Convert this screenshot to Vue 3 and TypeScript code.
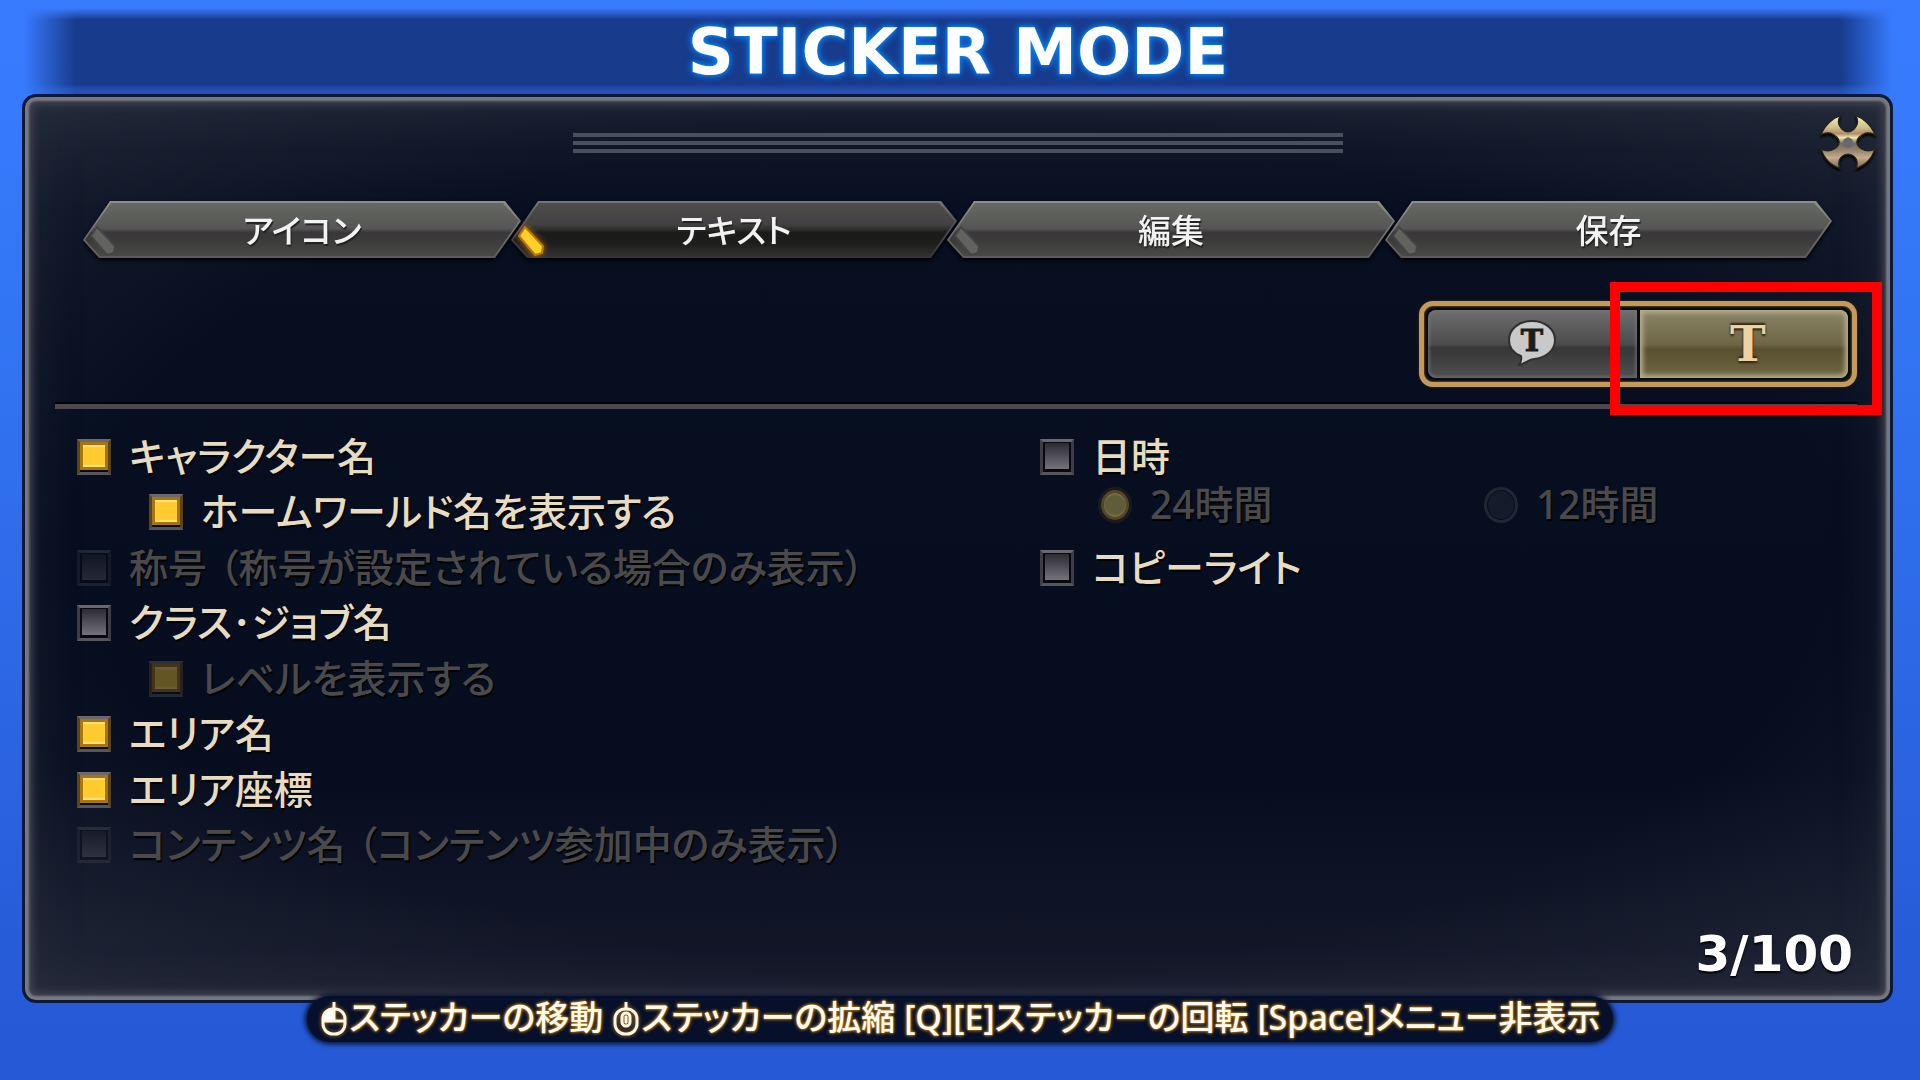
<script setup lang="ts">
import { ref } from 'vue'

interface Option {
  id: string
  label: string
  note?: string
  checked: boolean
  disabled?: boolean
  nested?: boolean
}

const tabs: string[] = ['アイコン', 'テキスト', '編集', '保存']
const activeTab = ref<number>(1)
const textKind = ref<'bubble' | 'plain'>('plain')
const clock = ref<'24' | '12'>('24')

const options = ref<Option[]>([
  { id: 'name', label: 'キャラクター名', checked: true },
  { id: 'world', label: 'ホームワールド名を表示する', checked: true, nested: true },
  { id: 'title', label: '称号', note: '（称号が設定されている場合のみ表示）', checked: false, disabled: true },
  { id: 'job', label: 'クラス･ジョブ名', checked: false },
  { id: 'level', label: 'レベルを表示する', checked: true, disabled: true, nested: true },
  { id: 'area', label: 'エリア名', checked: true },
  { id: 'coords', label: 'エリア座標', checked: true },
  { id: 'duty', label: 'コンテンツ名', note: '（コンテンツ参加中のみ表示）', checked: false, disabled: true },
])
const showDate = ref(false)
const showCopyright = ref(false)
</script>

<template>
  <div class="screen">
    <header class="banner">
      <h1>STICKER MODE</h1>
    </header>

    <main class="panel">
      <div class="grip"><i></i><i></i><i></i></div>
      <button class="close" type="button" aria-label="閉じる">
        <svg viewBox="88 73 172 170" width="56" height="56">
          <defs>
            <linearGradient id="brass" x1="0" y1="0" x2="0" y2="1">
              <stop offset="0" stop-color="#f6efb4" />
              <stop offset=".22" stop-color="#cfc08c" />
              <stop offset=".34" stop-color="#b08c68" />
              <stop offset=".42" stop-color="#f3e9a8" />
              <stop offset=".52" stop-color="#6f6c68" />
              <stop offset=".64" stop-color="#8f8068" />
              <stop offset=".8" stop-color="#c4ab90" />
              <stop offset="1" stop-color="#7c6448" />
            </linearGradient>
          </defs>
          <path
            d="M150 77C128 84 102 106 91 136Q106 127 120 131Q146 142 147 158Q146 176 122 184Q106 188 92 180C100 210 124 232 149 239Q143 226 148 212Q156 196 174 195Q192 196 200 212Q205 226 198 239C224 232 248 210 256 180Q242 188 226 184Q202 176 201 158Q202 142 228 131Q242 127 257 136C246 106 220 84 198 77Q206 92 202 104Q192 126 174 127Q156 126 146 104Q142 92 150 77Z"
            fill="url(#brass)" stroke="#2a241e" stroke-width="4" />
          <path d="M160 150L174 143L188 150L189 170L174 177L159 170Z" fill="#66686e" />
        </svg>
      </button>

      <nav class="tabs">
        <button v-for="(tab, i) in tabs" :key="tab" type="button" class="tab" :class="{ active: i === activeTab }"
          @click="activeTab = i">
          <svg class="gem" viewBox="0 0 32 34" width="32" height="34" aria-hidden="true">
            <path d="M10 3L28 22L27 29L20 31L4 12Z" />
          </svg>
          <span>{{ tab }}</span>
        </button>
      </nav>

      <div class="kind-row">
        <div class="kinds">
          <button type="button" class="kind" :class="{ on: textKind === 'bubble' }" aria-label="吹き出し"
            @click="textKind = 'bubble'">
            <svg viewBox="0 0 50 48" width="50" height="48">
              <path d="M25 3C38 3 48 11 48 22C48 33 38 40 27 41C22 41 18 46 12 47Q15 43 14 38C6 35 2 29 2 22C2 11 12 3 25 3Z"
                fill="#c9c9c9" stroke="#303030" stroke-width="2" />
              <text x="25" y="33" text-anchor="middle" font-size="30" fill="#1c1c1c" stroke="#1c1c1c">T</text>
            </svg>
          </button>
          <button type="button" class="kind" :class="{ on: textKind === 'plain' }" @click="textKind = 'plain'">
            <span>T</span>
          </button>
          <div class="marker"></div>
        </div>
      </div>

      <hr />

      <div class="options">
        <div class="column">
          <label v-for="o in options" :key="o.id" class="option" :class="{ nested: o.nested, off: o.disabled }">
            <input v-model="o.checked" type="checkbox" :disabled="o.disabled" />
            <span>{{ o.label }}<span v-if="o.note" class="note">{{ o.note }}</span></span>
          </label>
        </div>
        <div class="column">
          <label class="option">
            <input v-model="showDate" type="checkbox" />
            <span>日時</span>
          </label>
          <div class="clocks">
            <label class="option off">
              <input v-model="clock" type="radio" name="clock" value="24" disabled />
              <span>24時間</span>
            </label>
            <label class="option off">
              <input v-model="clock" type="radio" name="clock" value="12" disabled />
              <span>12時間</span>
            </label>
          </div>
          <label class="option">
            <input v-model="showCopyright" type="checkbox" />
            <span>コピーライト</span>
          </label>
        </div>
      </div>

      <p class="count">3/100</p>
    </main>

    <footer class="hints">
      <svg viewBox="0 0 28 36" width="30" height="36" aria-hidden="true">
        <rect x="3" y="8" width="22" height="25" rx="10" />
        <path d="M14 1V8M14 8V19M4 20H24" />
        <path class="solid" d="M13 9V19H4V16Q5 9 13 9Z" />
      </svg>
      <span>ステッカーの移動</span>
      <svg class="second" viewBox="0 0 28 36" width="30" height="36" aria-hidden="true">
        <rect x="3" y="8" width="22" height="25" rx="10" />
        <path d="M14 1V8" />
        <rect x="10" y="12" width="8" height="13" rx="4" />
        <path class="solid" d="M13 15H15V22H13Z" />
      </svg>
      <span>ステッカーの拡縮 [Q][E]ステッカーの回転 [Space]メニュー非表示</span>
    </footer>
  </div>
</template>

<style>
body {
  margin: 0;
  background: #2659d5;
}
</style>

<style scoped>
.screen {
  box-sizing: border-box;
  min-height: 100vh;
  display: flex;
  flex-direction: column;
  padding-bottom: 36px;
  background: linear-gradient(180deg, #397bff 0%, #3377f6 25%, #2d68e6 60%, #2659d5 95%);
  font-family: "Noto Sans", "Noto Sans CJK JP", sans-serif;
  font-feature-settings: "palt";
  font-weight: 500;
  color: #e8dcc0;
}

button {
  border: 0;
  padding: 0;
  background: none;
  font: inherit;
  color: inherit;
  cursor: pointer;
}

.banner {
  height: 94px;
  margin: 0 28px 0 24px;
  padding-top: 10px;
  box-sizing: border-box;
  display: flex;
  align-items: center;
  justify-content: center;
  background: linear-gradient(180deg, transparent 8px, #183b8c 20px, #183b8c 84px, #2450b4 90px);
  mask-image: linear-gradient(90deg, transparent, #000 52px, #000 calc(100% - 52px), transparent);
}

h1 {
  margin: 0;
  font: bold 64px/72px "DejaVu Sans", sans-serif;
  color: #fff;
  text-shadow: 0 0 3px #0a78e8, 0 0 6px #0a86f0, 0 0 8px #0a78e8;
}

.panel {
  position: relative;
  flex: 1;
  display: flex;
  flex-direction: column;
  margin: 0 27px 0 22px;
  border: 3px solid #0a1a38;
  border-radius: 14px;
  background:
    radial-gradient(ellipse at center, transparent 66%, rgba(52, 60, 74, 0.4) 100%),
    linear-gradient(180deg, #141c2c 0, #070f20 110px, #060d1e 75%, #161a2b 100%);
  box-shadow: inset 0 0 2px 4px #777880, inset 0 0 8px 7px #454652, inset 0 0 50px 4px rgba(52, 58, 72, 0.4);
}

.grip {
  width: 770px;
  max-width: 42%;
  margin: 36px auto 0;
  display: grid;
  gap: 4px;
}

.grip i {
  height: 4px;
  background: #4a4f5e;
}

.close {
  position: absolute;
  top: 17px;
  right: 14px;
  height: 56px;
}

.close svg {
  display: block;
  filter: drop-shadow(0 2px 1px #000);
}

.tabs {
  display: grid;
  grid-template-columns: 428fr 436fr 438fr 437fr;
  margin: 48px 68px 0 58px;
  filter: drop-shadow(0 2px 2px #000);
}

.tab {
  position: relative;
  height: 57px;
  margin-right: -10px;
  background: linear-gradient(#8e8e8e, #777 40%, #5a5a5a);
  clip-path: polygon(27px 0, calc(100% - 16px) 0, 100% 20px, calc(100% - 26px) 100%, 16px 100%, 0 39px);
  font-size: 33px;
  line-height: 60px;
  color: #f2f2f2;
  text-shadow: 1px 2px 1px #222;
}

.tab::before {
  content: "";
  position: absolute;
  inset: 2px;
  clip-path: polygon(26px 0, calc(100% - 16px) 0, 100% 18px, calc(100% - 25px) 100%, 15px 100%, 0 37px);
  background: linear-gradient(#666863 0, #555655 48%, #3a363a 56%, #3b3b3a 70%, #484a47 100%);
}

.tab.active {
  background: linear-gradient(#777, #555 40%, #333);
}

.tab.active::before {
  background: linear-gradient(#4d4d4a 0, #444044 40%, #2c3028 50%, #1b1b1b 56%, #1d1d1c 75%, #31312f 100%);
}

.tab span {
  position: relative;
}

.gem {
  position: absolute;
  left: 4px;
  bottom: 0;
  fill: #62635f;
  stroke: #454545;
  stroke-width: 2;
}

.active .gem {
  fill: #ffd02a;
  stroke: #b8780c;
  filter: drop-shadow(0 0 3px #c06a10);
}

.kind-row {
  display: flex;
  justify-content: flex-end;
  margin: 43px 33px 0 0;
}

.kinds {
  position: relative;
  box-sizing: border-box;
  display: grid;
  grid-template-columns: 1fr 1fr;
  gap: 3px;
  width: 438px;
  height: 86px;
  padding: 4px;
  border: 5px solid #c49a5c;
  border-radius: 14px;
  background: #050b18;
  box-shadow: inset 0 0 2px 1px #5a3c18, 0 0 2px #5a3c18;
}

.kind {
  display: flex;
  align-items: center;
  justify-content: center;
  padding-bottom: 4px;
  border-radius: 8px 0 0 8px;
  background: linear-gradient(#6e6e6e 0, #4c4c4c 50%, #363636 56%, #505050 100%);
  box-shadow: inset 0 0 3px 2px #77777799;
}

.kind + .kind {
  padding: 0 0 0 8px;
  border-radius: 0 8px 8px 0;
}

.kind.on {
  background: linear-gradient(#8c8468 0, #6e6646 50%, #5a5030 58%, #6e6642 100%);
  box-shadow: inset 0 0 5px 3px #b4b088;
}

.kind text,
.kind span {
  font-family: "DejaVu Serif", serif;
  font-weight: bold;
}

.kind span {
  font-size: 48px;
  line-height: 60px;
  color: #ecd2a4;
  text-shadow: 0 -2px 2px #2e2814, 0 2px 2px #2e2814;
}

.marker {
  position: absolute;
  top: -24px;
  right: -30px;
  width: 252px;
  height: 113px;
  border: 10px solid #f00;
  pointer-events: none;
}

hr {
  width: auto;
  height: 5px;
  margin: 17px 33px 0 30px;
  border: 0;
  background: #4b484f;
  box-shadow: 0 -2px 1px #02050c;
}

.options {
  display: grid;
  grid-template-columns: 963fr 850fr;
  padding: 20px 0 0 52px;
}

.column {
  display: grid;
  grid-template-columns: 1fr;
  grid-template-rows: repeat(8, 1fr);
  min-height: 444px;
}

.option {
  display: flex;
  align-items: center;
  gap: 18px;
  font-size: 39px;
  line-height: 52px;
  white-space: nowrap;
  text-shadow: 1px 2px 1px #000;
}

.option > span {
  padding-bottom: 2px;
}

.note {
  margin-left: 12px;
}

.nested {
  margin-left: 72px;
}

.off {
  color: #4a4a4c;
}

input {
  appearance: none;
  flex: none;
  display: grid;
  box-sizing: border-box;
  width: 34px;
  height: 36px;
  margin: 0;
  border: 3px solid #4e4b52;
  border-color: #6c676c #3e3c44 #55555c;
  background: #08090f;
}

input::before {
  content: "";
  margin: 1px 2px 3px;
  background: linear-gradient(#2c2a32, #74737a);
}

input:checked {
  border-left-color: #5a4320;
  border-right-color: #5a4320;
}

input:checked::before {
  margin: 0 0 2px;
  border: 3px solid #a8740e;
  background: #ffcb2e;
  box-shadow: inset 0 2px 1px #ffe27a, inset 0 -2px 1px #ffe27a;
}

input:disabled {
  opacity: 0.38;
}

input[type="checkbox"]:disabled:not(:checked) {
  opacity: 0.28;
}

input[type="radio"] {
  border-radius: 50%;
  border-color: #52545c;
}

input[type="radio"]::before {
  border-radius: 50%;
  margin: 1px;
  background: #30343f;
}

input[type="radio"]:checked {
  border-color: #3a2a18;
}

input[type="radio"]:checked::before {
  margin: 0;
  border: 3px solid #b48a38;
  background: #d0b858;
}

input[type="radio"]:checked:disabled {
  opacity: 0.45;
}

input[type="radio"]:disabled:not(:checked) {
  opacity: 0.35;
}

.clocks {
  display: grid;
  grid-template-columns: 386px 1fr;
  margin: -14px 0 0 58px;
}

.count {
  margin: auto 37px 22px auto;
  font: bold 50px/48px "DejaVu Sans", sans-serif;
  color: #fff;
  text-shadow: 0 2px 2px #000;
}

.hints {
  position: relative;
  align-self: center;
  display: flex;
  align-items: center;
  height: 46px;
  margin-top: -7px;
  margin-bottom: 2px;
  padding: 0 12px;
  border-radius: 23px;
  background: #06102a;
  box-shadow: 0 0 5px 2px #06102a;
  font-size: 34px;
  line-height: 44px;
  white-space: nowrap;
  color: #fffaf0;
  text-shadow: 0 0 2px #b07818, 0 0 3px #b07818, 0 0 4px #a06a10;
}

.hints span {
  padding-bottom: 4px;
}

.hints svg {
  fill: none;
  stroke: #fff6e4;
  stroke-width: 3;
  filter: drop-shadow(0 0 2px #b07818);
}

.hints .solid {
  fill: #fff;
  stroke-width: 1;
}

.second {
  margin-left: 8px;
}
</style>
